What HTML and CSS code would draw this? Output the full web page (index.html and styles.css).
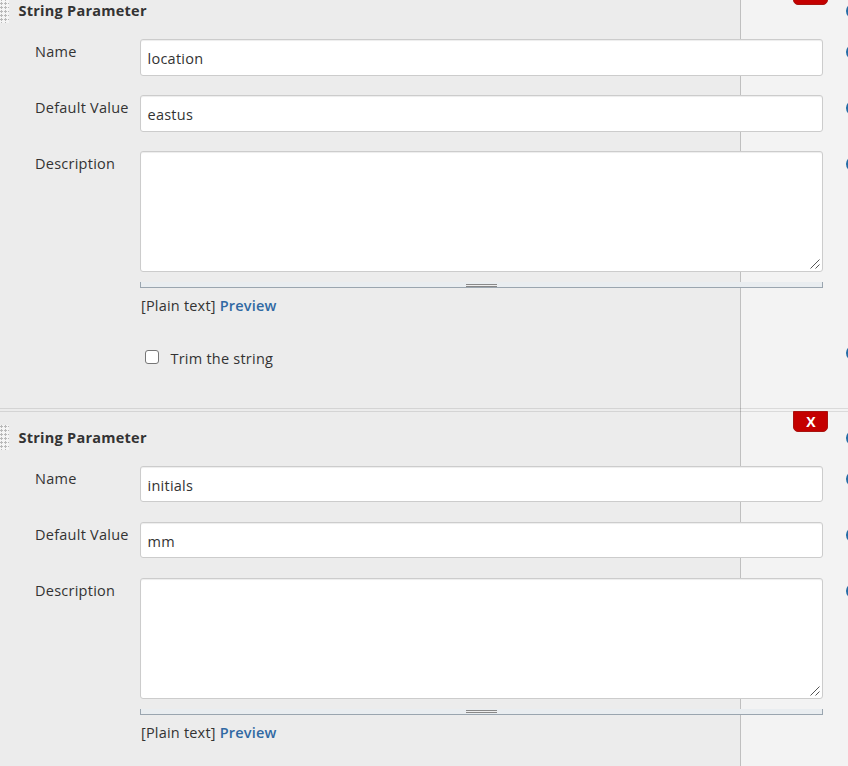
FILE: index.html
```html
<!DOCTYPE html>
<html lang="en">
<head>
<meta charset="utf-8">
<title>String Parameters</title>
<link rel="stylesheet" href="styles.css">
</head>
<body>
<main class="parameters">
  <section class="parameter">
    <button class="remove" type="button"></button>
    <header class="heading"><i class="grip"></i><b class="title">String Parameter</b><i class="help"></i></header>
    <div class="row"><label class="label">Name</label><div class="field tall"><span>location</span></div><i class="help"></i></div>
    <div class="row"><label class="label">Default Value</label><div class="field tall"><span>eastus</span></div><i class="help"></i></div>
    <div class="row area">
      <label class="label">Description</label>
      <div class="editor">
        <div class="textarea"><svg class="resize" width="10" height="10" viewBox="0 0 10 10"><path d="M.5 9.5l9-9M5.5 9.5l4-4"/></svg></div>
        <div class="handle"><i></i></div>
        <div class="format"><span class="plain">[Plain text]</span><a class="preview">Preview</a></div>
      </div>
      <i class="help"></i>
    </div>
    <div class="row trim"><span></span><label class="check"><i class="box"></i><span class="trim-text">Trim the string</span></label><i class="help"></i></div>
  </section>
  <section class="parameter last">
    <button class="remove" type="button"><span>X</span></button>
    <header class="heading"><i class="grip"></i><b class="title">String Parameter</b><i class="help"></i></header>
    <div class="row"><label class="label">Name</label><div class="field"><span>initials</span></div><i class="help"></i></div>
    <div class="row"><label class="label">Default Value</label><div class="field"><span>mm</span></div><i class="help"></i></div>
    <div class="row area">
      <label class="label">Description</label>
      <div class="editor">
        <div class="textarea"><svg class="resize" width="10" height="10" viewBox="0 0 10 10"><path d="M.5 9.5l9-9M5.5 9.5l4-4"/></svg></div>
        <div class="handle"><i></i></div>
        <div class="format"><span class="plain">[Plain text]</span><a class="preview">Preview</a></div>
      </div>
      <i class="help"></i>
    </div>
  </section>
</main>
</body>
</html>
```
FILE: styles.css
```css
* { box-sizing: border-box; }
html, body { height: 100%; overflow: hidden; }
body {
  margin: 0;
  color: #333;
  font: 14.5px/20px "Open Sans", "Noto Sans", sans-serif;
  background: linear-gradient(to right, #ececec 740px, #bfbfbf 740px, #bfbfbf 741px, #f3f3f3 741px);
}
.parameters {
  display: flex;
  flex-direction: column;
  gap: 2px;
  width: 862px;
  margin-top: -16px;
}
.parameter {
  position: relative;
  flex: none;
  height: 425px;
  border-top: 1px solid rgba(0, 0, 0, .1);
  border-bottom: 1px solid rgba(0, 0, 0, .1);
}
.last { height: 355px; border-bottom: 0; }
.remove {
  position: absolute;
  top: -1px;
  left: 793px;
  width: 35px;
  height: 21px;
  padding: 0 0 0 1px;
  border: 1px solid #a81410;
  border-radius: 0 0 5px 5px;
  background: #c40000;
  color: #fff;
  font: bold 14px/20px "Open Sans", sans-serif;
}
.heading {
  display: flex;
  align-items: flex-start;
  height: 54px;
  padding-top: 13px;
}
.grip {
  width: 9px;
  height: 25px;
  background: radial-gradient(circle at 1.5px 1.5px, #b9b9b9 1px, #f5f5f5 1.3px) 0 0 / 4px 4px;
}
.title { margin-left: 9.5px; padding-top: 3px; letter-spacing: .25px; }
.heading .help { margin: 5px 0 0 auto; }
.row {
  display: grid;
  grid-template-columns: 140px 683px 39px;
  height: 56px;
}
.label { padding: 3px 0 0 35px; white-space: nowrap; letter-spacing: .25px; }
.field {
  height: 36px;
  padding: 9px 6.5px 0;
  border: 1px solid #ccc;
  border-radius: 3px;
  background: #fff;
  box-shadow: inset 0 1px 1px rgba(0, 0, 0, .075);
  letter-spacing: .25px;
}
.tall { height: 37px; }
.help {
  justify-self: end;
  width: 16px;
  height: 16px;
  margin-top: 4.5px;
  border-radius: 50%;
  background: #216ba5;
}
.area { height: 192px; }
.textarea {
  display: flex;
  justify-content: flex-end;
  align-items: flex-end;
  height: 121px;
  padding: 0 2px 2px 0;
  border: 1px solid #ccc;
  border-radius: 3px;
  background: #fff;
  box-shadow: inset 0 1px 1px rgba(0, 0, 0, .075);
}
.resize { fill: none; stroke: #555; stroke-width: 1; }
.handle {
  display: flex;
  justify-content: center;
  height: 6px;
  margin-top: 10px;
  border: 1px solid #9aa5af;
  border-top: 0;
  background: #e9edf0;
}
.handle i {
  width: 31px;
  height: 3px;
  margin-top: 2px;
  border-top: 1px solid #888;
  border-bottom: 1px solid #888;
  background: #eee;
}
.last .handle i { margin-top: 1px; }
.format { display: flex; padding: 8px 0 0 1px; white-space: nowrap; letter-spacing: .2px; }
.preview { margin-left: 4px; color: #3069a3; font-weight: 600; }
.trim .help { margin-top: 2px; }
.check { display: flex; padding-left: 5px; }
.box {
  width: 14px;
  height: 14px;
  margin-top: 7px;
  border: 1px solid #767676;
  border-radius: 3px;
  background: #fff;
}
.trim-text { margin: 6px 0 0 11.5px; letter-spacing: .23px; }
```
